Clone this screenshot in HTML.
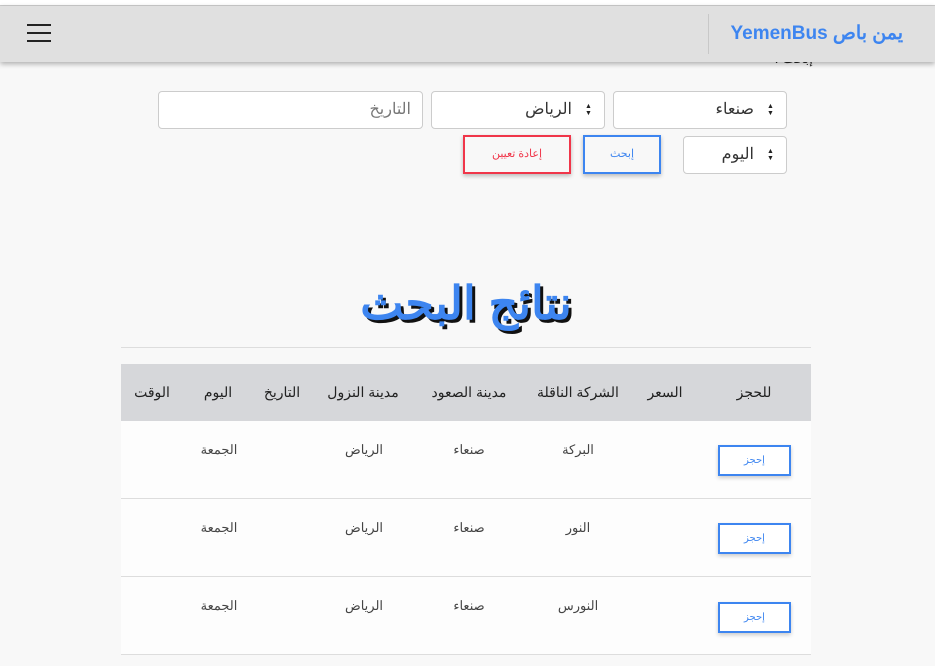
<!DOCTYPE html>
<html><head><meta charset="utf-8"><style>
*{box-sizing:border-box;margin:0;padding:0}
body{width:935px;height:666px;overflow:hidden;background:#f8f8f8;font-family:"Liberation Sans","Noto Sans CJK SC",sans-serif;position:relative;direction:rtl}
.a{position:absolute}
.top{left:0;top:0;width:935px;height:6px;background:#fff;border-bottom:1px solid #ccc}
.nav{left:0;top:6px;width:935px;height:56px;background:#e0e0e0;box-shadow:0 2px 5px rgba(0,0,0,.3);z-index:2}
.brand{right:32px;top:22px;color:#3d85f0;font-weight:bold;font-size:19px;white-space:nowrap;z-index:3}
.sep{left:708px;top:14px;width:1px;height:40px;background:#c8c8c8;z-index:3}
.ham{left:27px;width:24px;height:2px;background:#222;z-index:3}
.box{background:#fff;border:1px solid #ccc;border-radius:4px;font-size:16px;color:#333;padding:0 32px 0 11px;line-height:36px}
.btn{border:2px solid;font-size:11px;text-align:center;line-height:34px;box-shadow:0 2px 4px rgba(0,0,0,.25);background:#f8f8f8}
.th{top:364px;height:57px;line-height:57px;font-size:14px;color:#222;transform:translateX(50%)}
.td{font-size:13px;color:#444;transform:translateX(50%)}
.row{left:121px;width:690px;height:78px;background:#fdfdfd;border-bottom:1px solid #ddd}
.bk{left:718px;width:73px;height:31px;border:2px solid #3d85f0;background:#fff;color:#3d85f0;font-size:10px;text-align:center;line-height:27px;box-shadow:0 2px 4px rgba(0,0,0,.2)}
.ar{font-size:7px;line-height:7px;color:#222}
</style></head><body>
<div class="a top"></div>
<div class="a nav"></div>
<div class="a brand">يمن باص YemenBus</div>
<div class="a sep"></div>
<div class="a ham" style="top:24px"></div><div class="a ham" style="top:32px"></div><div class="a ham" style="top:40px"></div>
<div class="a" style="right:122px;top:50px;font-size:14px;color:#222">إبحث :</div>
<div class="a box" style="left:613px;top:91px;width:174px;height:38px">صنعاء</div>
<div class="a box" style="left:431px;top:91px;width:174px;height:38px">الرياض</div>
<div class="a box" style="left:158px;top:91px;width:265px;height:38px;color:#777;padding-right:11px">التاريخ</div>
<div class="a box" style="left:683px;top:136px;width:104px;height:38px">اليوم</div>
<div class="a ar" style="left:767px;top:103px">▲<br>▼</div>
<div class="a ar" style="left:585px;top:103px">▲<br>▼</div>
<div class="a ar" style="left:767px;top:148px">▲<br>▼</div>
<div class="a btn" style="left:583px;top:135px;width:78px;height:39px;border-color:#3d85f0;color:#3d85f0">إبحث</div>
<div class="a btn" style="left:463px;top:135px;width:108px;height:39px;border-color:#f0364a;color:#f0364a">إعادة تعيين</div>
<div class="a" style="left:121px;width:690px;top:276px;text-align:center;font-size:46px;font-weight:bold;color:#3d85f0;text-shadow:3px 3px 0 #111;direction:rtl">نتائج البحث</div>
<div class="a" style="left:121px;top:347px;width:690px;height:1px;background:#ddd"></div>
<div class="a" style="left:121px;top:364px;width:690px;height:57px;background:#d6d7da"></div>
<div class="a th" style="right:181px">للحجز</div>
<div class="a th" style="right:270px">السعر</div>
<div class="a th" style="right:357px">الشركة الناقلة</div>
<div class="a th" style="right:466px">مدينة الصعود</div>
<div class="a th" style="right:572px">مدينة النزول</div>
<div class="a th" style="right:653px">التاريخ</div>
<div class="a th" style="right:717px">اليوم</div>
<div class="a th" style="right:783px">الوقت</div>
<div class="a row" style="top:421px"></div>
<div class="a row" style="top:499px"></div>
<div class="a row" style="top:577px"></div>
<div class="a bk" style="top:445px">إحجز</div>
<div class="a bk" style="top:523px">إحجز</div>
<div class="a bk" style="top:602px">إحجز</div>
<div class="a td" style="top:442px;right:357px">البركة</div>
<div class="a td" style="top:520px;right:357px">النور</div>
<div class="a td" style="top:598px;right:357px">النورس</div>
<div class="a td" style="top:442px;right:466px">صنعاء</div>
<div class="a td" style="top:520px;right:466px">صنعاء</div>
<div class="a td" style="top:598px;right:466px">صنعاء</div>
<div class="a td" style="top:442px;right:571px">الرياض</div>
<div class="a td" style="top:520px;right:571px">الرياض</div>
<div class="a td" style="top:598px;right:571px">الرياض</div>
<div class="a td" style="top:442px;right:716px">الجمعة</div>
<div class="a td" style="top:520px;right:716px">الجمعة</div>
<div class="a td" style="top:598px;right:716px">الجمعة</div>
</body></html>
